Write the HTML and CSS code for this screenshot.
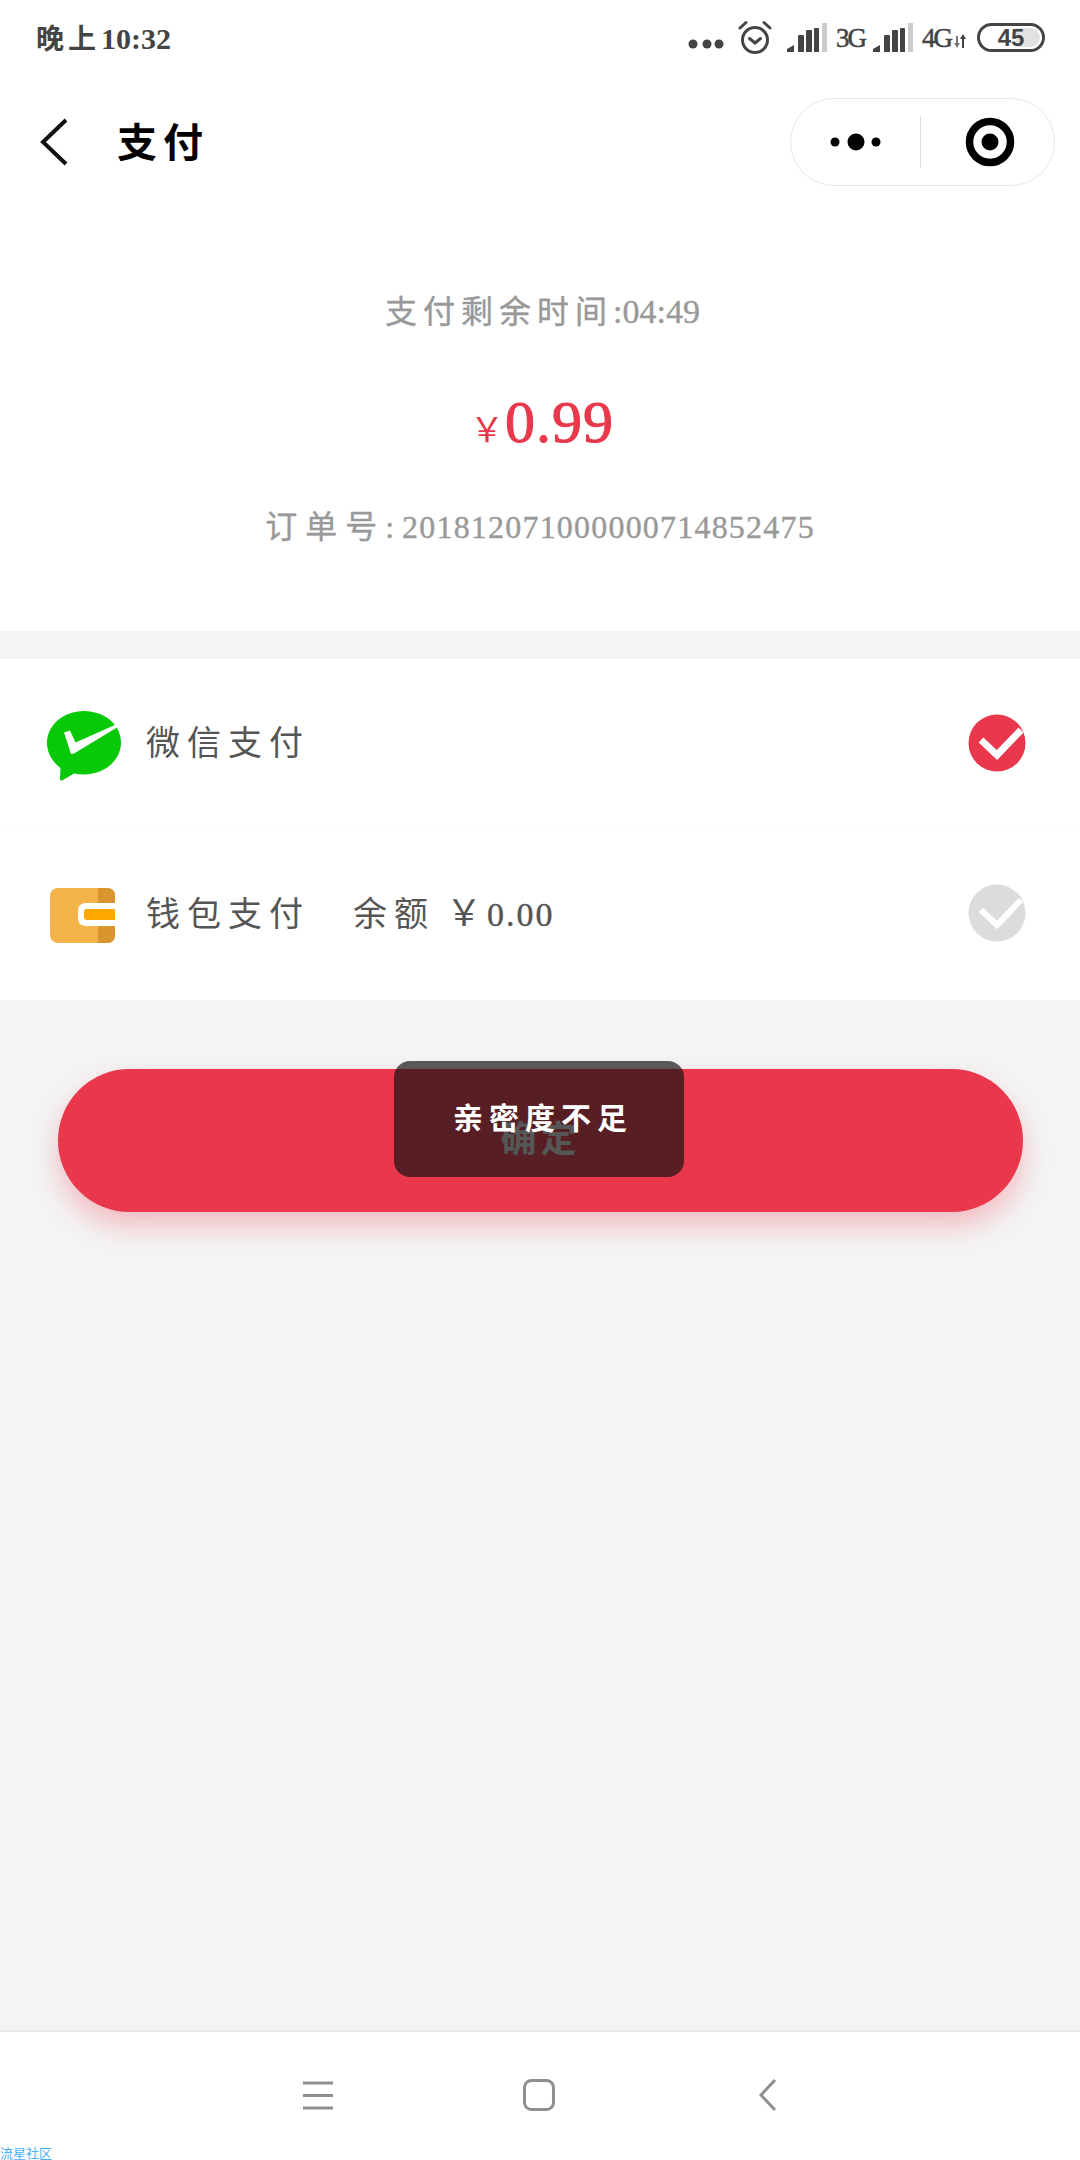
FILE: index.html
```html
<!DOCTYPE html>
<html lang="zh-CN">
<head>
    <meta charset="UTF-8">
    <meta name="viewport" content="width=device-width, initial-scale=1.0">
    <title>支付</title>
    <link rel="stylesheet" href="styles.css">
</head>
<body>
<div class="page">
    <div class="status-bar">
        <div class="status-time"><span class="cn">晚上</span>10:32</div>
        <div class="status-icons">
            <svg class="st-dots" width="36" height="12" viewBox="0 0 36 12"><circle cx="5" cy="6" r="4.5"/><circle cx="19" cy="6" r="4.5"/><circle cx="31" cy="6" r="4.5"/></svg>
            <svg class="st-alarm" width="34" height="34" viewBox="0 0 34 34" fill="none" stroke="#444" stroke-width="3"><circle cx="17" cy="20" r="12.5"/><path d="M11.5 18.5l5.5 4.5 5.500-4.500" stroke-linecap="round"/><path d="M2 8l6-5.500M32 8l-6-5.500" stroke-linecap="round"/></svg>
            <svg class="st-signal" width="40" height="29" viewBox="0 0 40 29"><path d="M0 29v-3l7-4v7zM11 29V13q0-1 1-1h4q1 0 1 1v16zM19 29V8q0-1 1-1h4q1 0 1 1v21zM27 29V6q0-1 1-1h3q1 0 1 1v23z"/><rect x="35" width="5" height="29" fill="#ccc"/></svg>
            <span class="st-net">3G</span>
            <svg class="st-signal" width="40" height="29" viewBox="0 0 40 29"><path d="M0 29v-3l7-4v7zM11 29V13q0-1 1-1h4q1 0 1 1v16zM19 29V8q0-1 1-1h4q1 0 1 1v21zM27 29V6q0-1 1-1h3q1 0 1 1v23z"/><rect x="35" width="5" height="29" fill="#ccc"/></svg>
            <span class="st-net">4G</span>
            <svg class="st-arrows" width="12" height="14" viewBox="0 0 12 14"><path d="M2 2h2v7h2l-3 5-3-5h2z" fill="#777"/><path d="M8 14h2V5h2L9 0 6 5h2z"/></svg>
            <div class="battery"><span class="battery-level"></span><span class="battery-num">45</span></div>
        </div>
    </div>

    <div class="nav-bar">
        <svg class="nav-back" width="28" height="48" viewBox="0 0 28 48" fill="none" stroke="#111" stroke-width="4"><path d="M26 2L3 24l23 22"/></svg>
        <div class="nav-title">支付</div>
        <div class="capsule">
            <div class="capsule-part">
                <svg width="60" height="20" viewBox="0 0 60 20"><circle cx="9" cy="10" r="4.500"/><circle cx="30" cy="10" r="8.500"/><circle cx="50" cy="10" r="4.500"/></svg>
            </div>
            <div class="capsule-line"></div>
            <div class="capsule-part capsule-part-right">
                <svg width="50" height="50" viewBox="0 0 50 50"><circle cx="25" cy="25" r="20.500" fill="none" stroke="#000" stroke-width="7.500"/><circle cx="25" cy="25" r="8.500"/></svg>
            </div>
        </div>
    </div>

    <div class="summary">
        <div class="timer"><span class="cn">支付剩余时间</span>:04:49</div>
        <div class="amount"><span class="amount-unit">￥</span>0.99</div>
        <div class="order"><span class="cn">订单号</span>: <span class="order-no">201812071000000714852475</span></div>
    </div>

    <div class="pay-list">
        <div class="pay-row pay-row-first">
            <svg class="pay-icon" width="80" height="80" viewBox="0 0 80 80">
                <path d="M40 7c-20.500 0-37 14.200-37 32 0 10 5.500 19 13.500 25l-.5 11q0 3 3 1l11-6.500c3.200.7 6.500 1 10 1 20.500 0 37-14.300 37-32S60.500 7 40 7z" fill="#07c907"/>
                <path d="M20 28.500l6-2 5.500 12L72 20.500l1 3-43 26-3 .5z" fill="#fff"/>
            </svg>
            <div class="pay-text"><span class="cn">微信支付</span></div>
            <svg class="pay-check" width="58" height="58" viewBox="0 0 58 58"><circle cx="29" cy="29" r="28.500" fill="#e9384b"/><path d="M13 26l16 15 24-25" fill="none" stroke="#fff" stroke-width="7"/></svg>
        </div>
        <div class="pay-row pay-row-last">
            <svg class="pay-icon pay-icon-wallet" width="80" height="80" viewBox="0 0 80 80">
                <rect x="6" y="12" width="65" height="55" rx="8" fill="#f4b349"/>
                <path d="M54 12h9q8 0 8 8v39q0 8-8 8h-9z" fill="#d9962f"/>
                <path d="M71 27H42q-8 0-8 8v7q0 8 8 8h29z" fill="#fff"/>
                <path d="M71 33H43q-3 0-3 3v5q0 3 3 3h28z" fill="#ffa800"/>
            </svg>
            <div class="pay-text"><span class="cn">钱包支付</span><span class="cn balance-label">余额</span><span class="balance">￥</span><span class="balance-num">0.00</span></div>
            <svg class="pay-check" width="58" height="58" viewBox="0 0 58 58"><circle cx="29" cy="29" r="28.500" fill="#dcdcdc"/><path d="M13 26l16 15 24-25" fill="none" stroke="#fff" stroke-width="6"/></svg>
        </div>
    </div>

    <div class="content">
        <div class="confirm-btn">确定</div>
    </div>

    <div class="sys-nav">
        <svg class="sys-menu" width="30" height="30" viewBox="0 0 30 30" fill="none" stroke="#8f8f8f" stroke-width="3"><path d="M0 3h30M0 15.500h30M0 28h30"/></svg>
        <svg class="sys-home" width="32" height="32" viewBox="0 0 32 32" fill="none" stroke="#8f8f8f" stroke-width="3"><rect x="1.500" y="1.500" width="29" height="29" rx="7"/></svg>
        <svg class="sys-back" width="18" height="32" viewBox="0 0 18 32" fill="none" stroke="#8f8f8f" stroke-width="3"><path d="M16 1L2 16l14 15"/></svg>
    </div>

    <div class="toast">亲密度不足</div>
    <div class="watermark">流星社区</div>
</div>
</body>
</html>
```

FILE: styles.css
```css
body {
    margin: 0;
    padding: 0;
    font-family: "Liberation Serif", "Noto Sans CJK SC", serif;
    background-color: #fff;
}
.page {
    position: relative;
    width: 1080px;
    height: 2160px;
    overflow: hidden;
    display: flex;
    flex-direction: column;
    background-color: #f4f4f4;
}

/* status bar */
.status-bar {
    height: 76px;
    padding: 0 35px 0 36px;
    display: flex;
    justify-content: space-between;
    align-items: center;
    background-color: #fff;
    color: #444;
    flex-shrink: 0;
}
.status-time {
    font-size: 30px;
    font-weight: bold;
    padding-bottom: 2px;
}
.status-time .cn {
    font-size: 28px;
    letter-spacing: 4px;
    margin-right: 1px;
}
.status-icons {
    display: flex;
    align-items: center;
    gap: 9px;
}
.status-icons svg {
    fill: #444;
    flex-shrink: 0;
}
.st-dots {
    margin-top: 12px;
}
.st-alarm {
    margin: -2px 0 0 5px;
    fill: none !important;
}
.st-signal {
    margin-top: -1px;
}
.st-alarm + .st-signal {
    margin-left: 6px;
}
.st-net {
    font-size: 27px;
    font-weight: normal;
    -webkit-text-stroke: 0.5px #444;
    letter-spacing: -2px;
    width: 28px;
}
.st-arrows {
    margin: 6px 0 0 -5px;
}
.battery {
    position: relative;
    width: 68px;
    height: 29px;
    margin: -1px 0 0 2px;
    box-sizing: border-box;
    border: 3.5px solid #444;
    border-radius: 15px;
    display: flex;
    align-items: center;
    justify-content: center;
    overflow: hidden;
}
.battery-level {
    position: absolute;
    top: 2px;
    bottom: 2px;
    right: 2px;
    width: 24px;
    background-color: #e2e2e2;
    border-radius: 0 10px 10px 0;
}
.battery-num {
    position: relative;
    font-family: "Liberation Sans", sans-serif;
    font-size: 24px;
    font-weight: bold;
}

/* title bar */
.nav-bar {
    height: 132px;
    padding: 0 25px 0 40px;
    display: flex;
    align-items: center;
    background-color: #fff;
    flex-shrink: 0;
}
.nav-title {
    margin-left: 49px;
    padding-bottom: 4px;
    flex: 1;
    font-size: 40px;
    font-weight: bold;
    letter-spacing: 6px;
    color: #000;
}
.capsule {
    width: 265px;
    height: 88px;
    box-sizing: border-box;
    border: 1px solid #e8e8e8;
    border-radius: 44px;
    display: flex;
    align-items: center;
}
.capsule-part {
    flex: 1;
    display: flex;
    justify-content: center;
    align-items: center;
}
.capsule-part-right {
    padding-left: 4px;
}
.capsule-line {
    width: 1px;
    height: 52px;
    background-color: #dcdcdc;
}

/* amount block */
.summary {
    height: 423px;
    box-sizing: border-box;
    padding-top: 80px;
    display: flex;
    flex-direction: column;
    align-items: center;
    background-color: #fff;
    color: #999;
    flex-shrink: 0;
}
.timer {
    height: 48px;
    line-height: 48px;
    margin-left: 5px;
    font-size: 34px;
    -webkit-text-stroke: 0.4px #999;
}
.timer .cn {
    font-size: 32px;
    letter-spacing: 6px;
}
.amount {
    height: 80px;
    line-height: 80px;
    margin-top: 46px;
    margin-left: 4px;
    font-size: 60px;
    letter-spacing: 1px;
    -webkit-text-stroke: 1px #e9384b;
    color: #e9384b;
}
.amount-unit {
    font-size: 34px;
    -webkit-text-stroke: 0;
}
.order {
    height: 48px;
    line-height: 48px;
    margin-top: 41px;
    font-size: 32px;
    -webkit-text-stroke: 0.4px #999;
}
.order .cn {
    letter-spacing: 8px;
}
.order-no {
    letter-spacing: 1.2px;
}

/* pay options */
.pay-list {
    margin-top: 28px;
    background-color: #fff;
    flex-shrink: 0;
}
.pay-row {
    display: flex;
    align-items: center;
    padding: 0 54px 0 44px;
    box-sizing: border-box;
}
.pay-row-first {
    height: 169px;
    border-bottom: 1px solid #fafafa;
}
.pay-row-last {
    height: 172px;
    padding-bottom: 2px;
}
.pay-icon {
    margin-top: 1px;
}
.pay-icon-wallet {
    margin-top: 5px;
}
.pay-text {
    flex: 1;
    margin-left: 22px;
    padding-bottom: 6px;
    font-size: 34px;
    color: #555;
}
.pay-text .cn {
    letter-spacing: 7px;
}
.pay-text .balance-label {
    margin-left: 43px;
}
.balance {
    margin-left: 11px;
    font-size: 36px;
}
.balance-num {
    margin-left: 5px;
    letter-spacing: 2px;
    -webkit-text-stroke: 0.4px #555;
}

/* button */
.content {
    flex: 1;
    padding: 69px 57px 0 58px;
}
.confirm-btn {
    height: 143px;
    border-radius: 72px;
    background-color: #e9384b;
    box-shadow: 0 14px 28px rgba(235, 56, 76, 0.3);
    display: flex;
    justify-content: center;
    align-items: center;
    padding-bottom: 10px;
    box-sizing: border-box;
    font-size: 36px;
    font-weight: bold;
    letter-spacing: 4px;
    color: #e4e8e8;
}

/* system navigation */
.sys-nav {
    height: 130px;
    box-sizing: border-box;
    border-top: 2px solid #e8e8e8;
    padding: 0 0 2px 303px;
    display: flex;
    align-items: center;
    background-color: #fff;
    flex-shrink: 0;
}
.sys-home {
    margin-left: 190px;
}
.sys-back {
    margin-left: 204px;
}

/* overlays */
.toast {
    position: absolute;
    left: 394px;
    top: 1061px;
    width: 290px;
    height: 116px;
    border-radius: 16px;
    background-color: rgba(17, 17, 17, 0.68);
    color: #fff;
    font-size: 30px;
    font-weight: bold;
    letter-spacing: 6px;
    display: flex;
    justify-content: center;
    align-items: center;
    padding: 0 0 6px 8px;
    box-sizing: border-box;
}
.watermark {
    position: absolute;
    left: 0;
    bottom: 0;
    font-family: "Noto Sans CJK SC", sans-serif;
    font-size: 13px;
    line-height: 14px;
    color: #4ab0f8;
}
```
